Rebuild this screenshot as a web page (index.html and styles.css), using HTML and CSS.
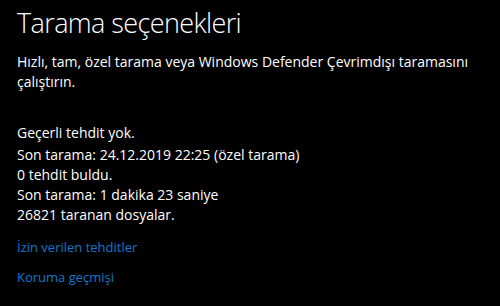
FILE: index.html
```html
<!DOCTYPE html>
<html lang="tr">
<head>
<meta charset="utf-8">
<link rel="stylesheet" href="styles.css">
</head>
<body>
<main class="page">
  <h1 class="title">Tarama seçenekleri</h1>
  <p class="intro">Hızlı, tam, özel tarama veya Windows Defender Çevrimdışı taramasını çalıştırın.</p>
  <section class="status">
    <p class="status-head">Geçerli tehdit yok.</p>
    <p class="status-line">Son tarama: 24.12.2019 22:25 (özel tarama)</p>
    <p class="status-line">0 tehdit buldu.</p>
    <p class="status-line">Son tarama: 1 dakika 23 saniye</p>
    <p class="status-line">26821 taranan dosyalar.</p>
  </section>
  <nav class="links">
    <a class="link" href="#">İzin verilen tehditler</a>
    <a class="link" href="#">Koruma geçmişi</a>
  </nav>
</main>
</body>
</html>
```

FILE: styles.css
```css
html, body {
  margin: 0;
  padding: 0;
  background: #000;
}
body {
  width: 500px;
  height: 306px;
  overflow: hidden;
  font-family: "Open Sans", "Noto Sans", sans-serif;
  color: #fff;
}
.page {
  padding: 4px 17px 0 17px;
  display: flex;
  flex-direction: column;
}
.title {
  margin: 0;
  font-size: 27px;
  font-weight: 300;
  line-height: 38px;
  letter-spacing: -0.6px;
}
.intro {
  margin: 10px 0 0 0;
  font-size: 14px;
  line-height: 20px;
  width: 470px;
}
.status {
  margin-top: 31px;
  display: flex;
  flex-direction: column;
}
.status p {
  margin: 0;
  font-size: 14px;
  line-height: 20px;
}
.status-head {
  margin-bottom: 2px !important;
}
.links {
  margin-top: 12px;
  display: flex;
  flex-direction: column;
  gap: 10px;
}
.link {
  color: #0f78cf;
  text-decoration: none;
  font-size: 13px;
  line-height: 20px;
}
```
